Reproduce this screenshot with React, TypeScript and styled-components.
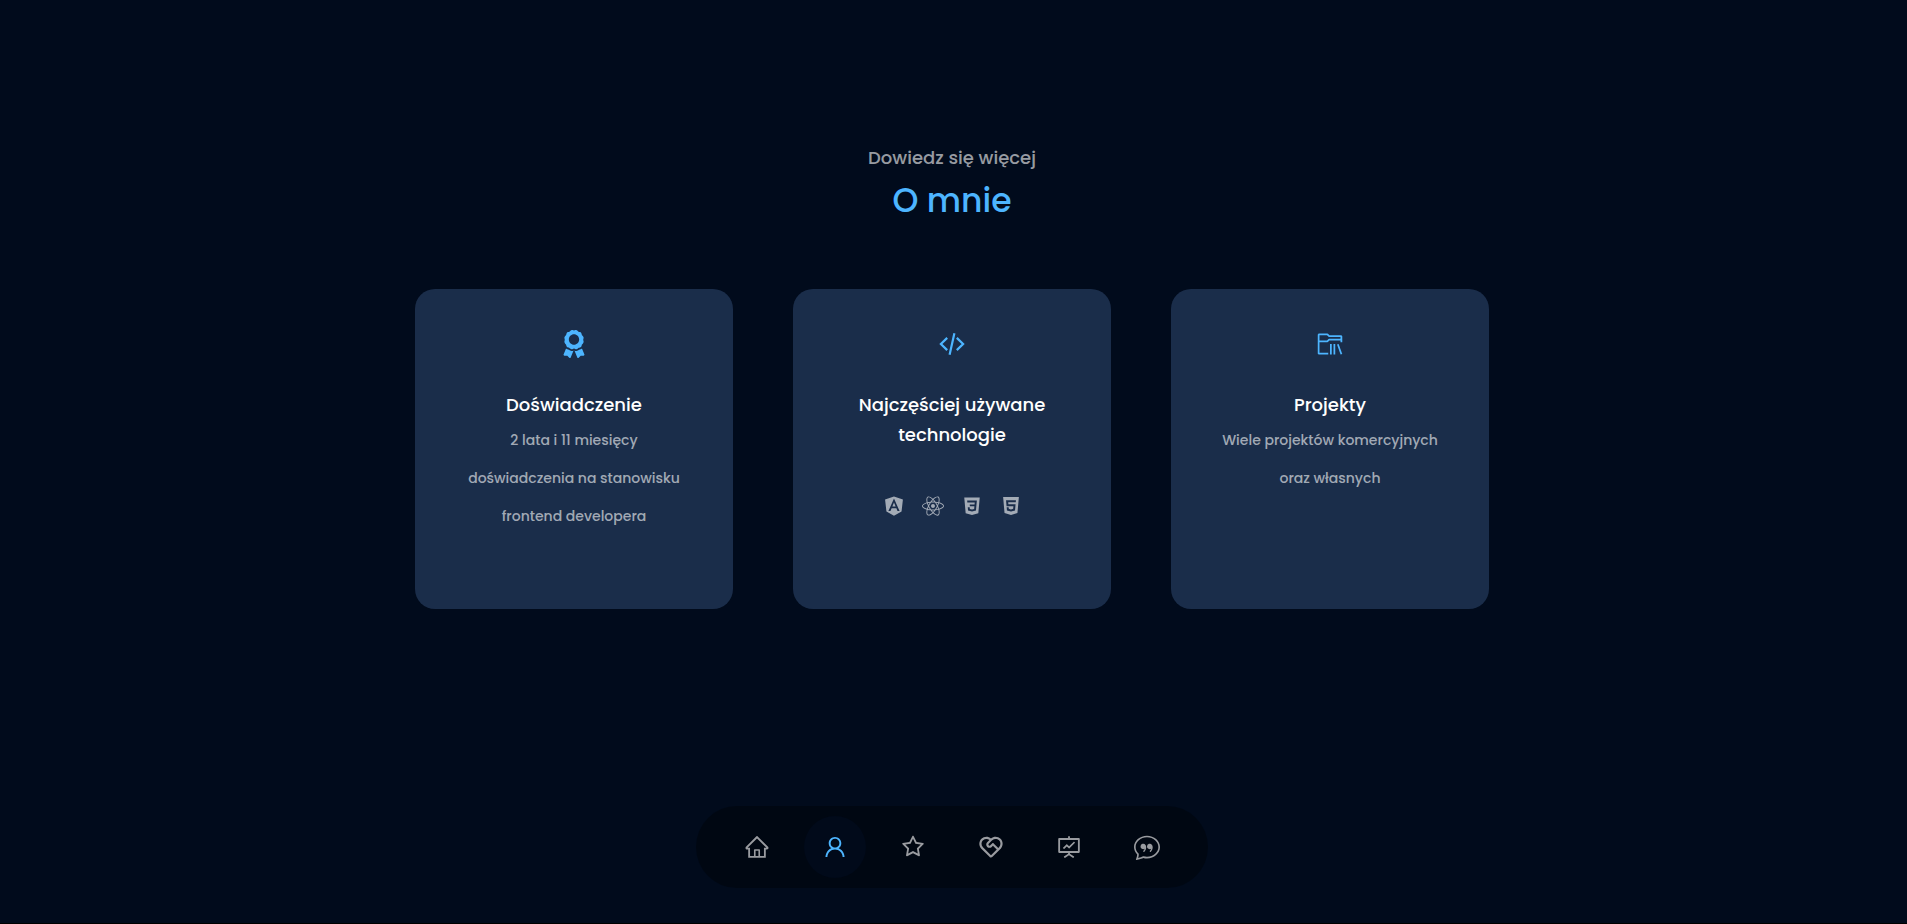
import React from 'react';
import styled, { createGlobalStyle } from 'styled-components';
import { FaAngular, FaAward, FaReact } from 'react-icons/fa';
import {
  AiFillHtml5,
  AiOutlineFundProjectionScreen,
  AiOutlineHome,
  AiOutlineStar,
  AiOutlineUser,
} from 'react-icons/ai';
import { BsChatQuote } from 'react-icons/bs';
import { DiCss3 } from 'react-icons/di';
import { RiServiceLine } from 'react-icons/ri';
import { VscFolderLibrary } from 'react-icons/vsc';

const colors = {
  background: '#010b1c',
  card: '#1a2d4a',
  primary: '#4db5ff',
  light: 'rgba(255, 255, 255, 0.6)',
  white: '#fff',
};

const GlobalStyle = createGlobalStyle`
  * {
    box-sizing: border-box;
    margin: 0;
    padding: 0;
  }

  body {
    background: ${colors.background};
    color: ${colors.white};
    font-family: Poppins, Inter, sans-serif;
    font-weight: 500;
  }
`;

const Page = styled.div`
  min-height: 100vh;
  padding: 143px 3px 35px 0;
  border-bottom: 1px solid #000;
  display: flex;
  flex-direction: column;
  align-items: center;
`;

const About = styled.section`
  width: 100%;
  display: flex;
  flex-direction: column;
  align-items: center;
  text-align: center;
`;

const Kicker = styled.p`
  color: ${colors.light};
  font-size: 18px;
  line-height: 30px;
`;

const Heading = styled.h2`
  color: ${colors.primary};
  font-size: 33px;
  font-weight: 500;
  line-height: 56px;
`;

const Cards = styled.div`
  width: 100%;
  max-width: 1074px;
  margin-top: 60px;
  display: grid;
  grid-template-columns: repeat(auto-fit, minmax(280px, 1fr));
  gap: 60px;
`;

const Card = styled.article`
  min-height: 320px;
  padding: 41px 48px;
  border-radius: 20px;
  background: ${colors.card};
  display: flex;
  flex-direction: column;
  align-items: center;
`;

const CardIcon = styled.span`
  margin-bottom: 32px;
  color: ${colors.primary};
  font-size: 28px;
  line-height: 0;
`;

const CardTitle = styled.h3`
  font-size: 18px;
  font-weight: 500;
  line-height: 30px;
`;

const CardText = styled.p`
  margin-top: 1px;
  color: ${colors.light};
  font-size: 14px;
  line-height: 38px;
`;

const TechList = styled.ul`
  margin-top: 45px;
  display: flex;
  gap: 17px;
  color: ${colors.light};
  font-size: 22px;
  line-height: 0;
  list-style: none;
`;

const NavBar = styled.nav`
  margin-top: auto;
  padding: 10px 30px;
  border-radius: 41px;
  background: rgba(0, 0, 0, 0.35);
  display: flex;
  gap: 16px;
`;

const NavLink = styled.a<{ $active?: boolean }>`
  width: 62px;
  height: 62px;
  border-radius: 50%;
  background: ${({ $active }) => ($active ? '#010a1a' : 'transparent')};
  color: ${({ $active }) => ($active ? colors.primary : colors.light)};
  font-size: 26px;
  display: flex;
  align-items: center;
  justify-content: center;
`;

const CodeIcon = () => (
  <svg width="1em" height="1em" viewBox="0 0 28 28" fill="none" stroke="currentColor" strokeWidth="2.2" aria-hidden="true">
    <path d="M9.2 7.9 2.9 14l6.3 6.1M18.8 7.9l6.3 6.1-6.3 6.1M16.4 3.3l-4.8 21.4" />
  </svg>
);

const technologies = [
  { name: 'Angular', Icon: FaAngular },
  { name: 'React', Icon: FaReact },
  { name: 'CSS3', Icon: DiCss3 },
  { name: 'HTML5', Icon: AiFillHtml5 },
];

const links = [
  { href: '#home', label: 'Start', Icon: AiOutlineHome },
  { href: '#about', label: 'O mnie', Icon: AiOutlineUser, active: true },
  { href: '#experience', label: 'Umiejętności', Icon: AiOutlineStar },
  { href: '#services', label: 'Usługi', Icon: RiServiceLine },
  { href: '#portfolio', label: 'Projekty', Icon: AiOutlineFundProjectionScreen },
  { href: '#contact', label: 'Kontakt', Icon: BsChatQuote },
];

export default function App() {
  return (
    <>
      <GlobalStyle />
      <Page>
        <About id="about">
          <Kicker>Dowiedz się więcej</Kicker>
          <Heading>O mnie</Heading>
          <Cards>
            <Card>
              <CardIcon><FaAward /></CardIcon>
              <CardTitle>Doświadczenie</CardTitle>
              <CardText>2 lata i 11 miesięcy doświadczenia na stanowisku frontend developera</CardText>
            </Card>
            <Card>
              <CardIcon><CodeIcon /></CardIcon>
              <CardTitle>Najczęściej używane technologie</CardTitle>
              <TechList>
                {technologies.map(({ name, Icon }) => (
                  <li key={name} aria-label={name}><Icon /></li>
                ))}
              </TechList>
            </Card>
            <Card>
              <CardIcon><VscFolderLibrary /></CardIcon>
              <CardTitle>Projekty</CardTitle>
              <CardText>Wiele projektów komercyjnych oraz własnych</CardText>
            </Card>
          </Cards>
        </About>
        <NavBar aria-label="Nawigacja">
          {links.map(({ href, label, Icon, active }) => (
            <NavLink key={href} href={href} aria-label={label} $active={active}>
              <Icon />
            </NavLink>
          ))}
        </NavBar>
      </Page>
    </>
  );
}
